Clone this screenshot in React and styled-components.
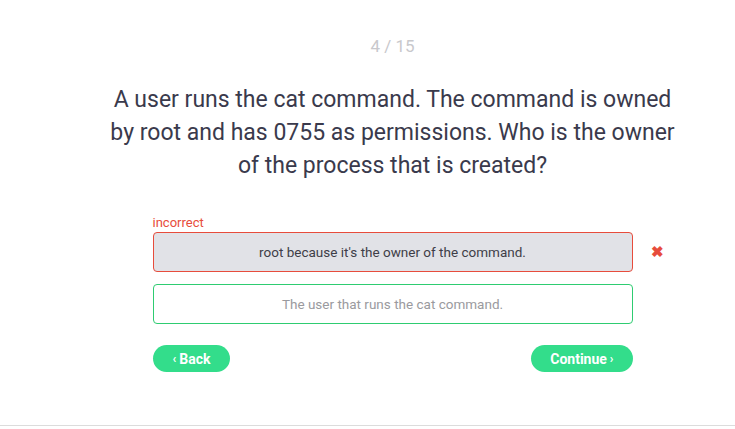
import React from 'react';
import styled, { createGlobalStyle } from 'styled-components';

const Global = createGlobalStyle`
  body { margin: 0; background: #fff; font-family: Roboto, "Liberation Sans", sans-serif; }
`;

const Page = styled.div`
  height: 426px;
  border-bottom: 1px solid #dcdcdc;
  box-sizing: border-box;
  padding-left: 50px;
`;

const Main = styled.div`
  width: 480px;
  margin: 0 auto;
  display: flex;
  flex-direction: column;
`;

const Counter = styled.div`
  text-align: center;
  color: #c8c8cc;
  font-size: 17px;
  margin-top: 36px;
  line-height: 20px;
`;

const Question = styled.h1`
  margin: 27px -45px 0;
  text-align: center;
  font-weight: 400;
  font-size: 23px;
  line-height: 33px;
  color: #3a3a4c;
`;

const Answers = styled.div`
  margin-top: 33px;
  display: flex;
  flex-direction: column;
  gap: 12px;
`;

const Label = styled.div`
  color: #e74c3c;
  font-size: 13px;
  line-height: 15px;
  margin-bottom: -10px;
`;

const Row = styled.div`
  position: relative;
`;

const Answer = styled.div`
  height: 40px;
  box-sizing: border-box;
  border-radius: 4px;
  border: 1px solid ${p => (p.$wrong ? '#e74c3c' : '#2ecc71')};
  background: ${p => (p.$wrong ? '#e1e2e7' : '#fff')};
  color: ${p => (p.$wrong ? '#3e3e48' : '#9a9a9e')};
  font-size: 13.5px;
  display: flex;
  align-items: center;
  justify-content: center;
`;

const Mark = styled.span`
  position: absolute;
  right: -31px;
  top: 11px;
  color: #e74c3c;
  font-size: 15px;
  font-weight: 700;
`;

const Nav = styled.div`
  margin-top: 21px;
  display: flex;
  justify-content: space-between;
`;

const Btn = styled.button`
  height: 27px;
  padding: 0 ${p => p.$pad}px;
  border: none;
  border-radius: 14px;
  background: #33dd8b;
  color: #fff;
  font-family: Roboto, "Liberation Sans", sans-serif;
  font-weight: 700;
  font-size: 14px;
  display: flex;
  align-items: center;
  gap: 3px;
`;

const Chev = styled.span`
  font-size: 12px;
`;

export default function App() {
  return (
    <>
      <Global />
      <Page>
        <Main>
          <Counter>4 / 15</Counter>
          <Question>
            A user runs the cat command. The command is owned by root and has 0755 as permissions. Who is the owner of the process that is created?
          </Question>
          <Answers>
            <Label>incorrect</Label>
            <Row>
              <Answer $wrong>root because it's the owner of the command.</Answer>
              <Mark>✖</Mark>
            </Row>
            <Answer>The user that runs the cat command.</Answer>
          </Answers>
          <Nav>
            <Btn $pad={20}><Chev>‹</Chev>Back</Btn>
            <Btn $pad={19}>Continue<Chev>›</Chev></Btn>
          </Nav>
        </Main>
      </Page>
    </>
  );
}
